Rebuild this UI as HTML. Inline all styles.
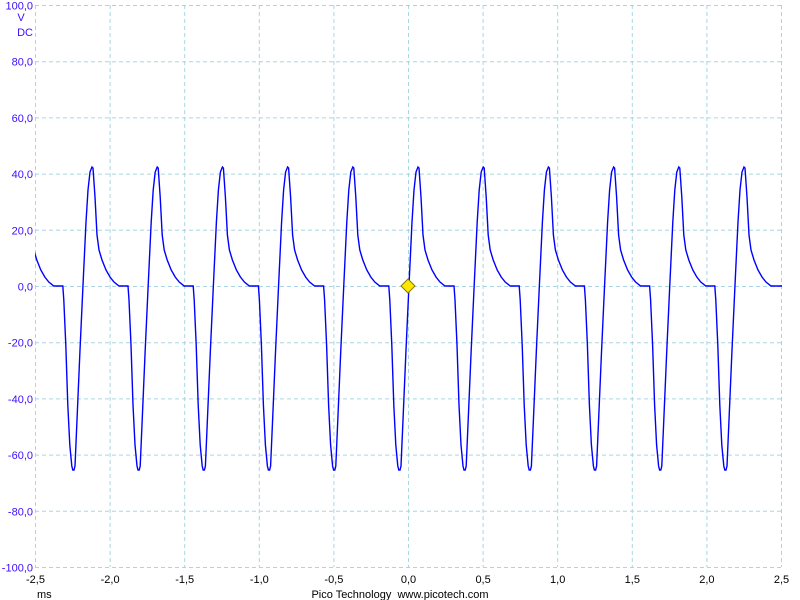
<!DOCTYPE html>
<html><head><meta charset="utf-8"><style>
html,body{margin:0;padding:0;background:#fff;width:800px;height:600px;overflow:hidden}
svg{position:absolute;left:0;top:0}
text{font-family:"Liberation Sans",sans-serif;font-size:11px}
</style></head><body>
<svg id="s" width="800" height="600" xmlns="http://www.w3.org/2000/svg">
<g id="grid" stroke="#a9d6e3" stroke-width="1" stroke-dasharray="4,3"></g>
<g id="ylab" fill="#3d0cff" text-anchor="end"></g>
<g id="xlab" fill="#000" text-anchor="middle"></g>
<defs><clipPath id="c"><rect x="35" y="0" width="747" height="600"/></clipPath></defs>
<path id="w" fill="none" stroke="#0000ff" stroke-width="1.4" clip-path="url(#c)"/>
<polygon points="408,279 415,286 408,293 401,286" fill="#ffe800" stroke="#8a7a00" stroke-width="1"/>
<text x="21" y="21" fill="#3d0cff" text-anchor="middle">V</text>
<text x="33" y="36" fill="#3d0cff" text-anchor="end">DC</text>
<text x="37" y="598" fill="#000">ms</text>
<text x="400" y="598" fill="#000" text-anchor="middle" style="white-space:pre">Pico Technology  www.picotech.com</text>
</svg>
<script>
var ns="http://www.w3.org/2000/svg";
function el(p,t,a,txt){var e=document.createElementNS(ns,t);for(var k in a)e.setAttribute(k,a[k]);if(txt!=null)e.textContent=txt;document.getElementById(p).appendChild(e);}
var xl=["-2,5","-2,0","-1,5","-1,0","-0,5","0,0","0,5","1,0","1,5","2,0","2,5"];
for(var i=0;i<=10;i++){var x=35.5+i*74.6;el("grid","line",{x1:x,y1:5,x2:x,y2:567});
 el("xlab","text",{x:x,y:583},xl[i]);}
var yl=["100,0","80,0","60,0","40,0","20,0","0,0","-20,0","-40,0","-60,0","-80,0","-100,0"];
for(var i=0;i<=10;i++){var y=5.5+i*56.2;el("grid","line",{x1:35,y1:y,x2:782,y2:y});
 el("ylab","text",{x:33,y:y+4},yl[i]);}
var pts=[[-18,470],[-17,466],[-15,420],[-12,350],[-9,285],[-6,222],[-4,190],[-2,172],[0,167],[1,168],[3,197],[5,235],[7,250],[10,260],[14,270],[18,277],[22,282],[27,286],[36,286],[37,300],[39,345],[41,405],[43,445],[45,466],[46,470]];
var d="";
for(var k=-1;k<=10;k++){var P=92+65.2*k;
 for(var j=0;j<pts.length;j++){ if(k==-1&&pts[j][0]<0)continue; if(k==10&&pts[j][0]>36)continue;
  var x=P+pts[j][0],y=pts[j][1]; d+=(d?"L":"M")+x.toFixed(1)+","+y;}}
d+="L783,286";
document.getElementById("w").setAttribute("d",d);
</script>
</body></html>
